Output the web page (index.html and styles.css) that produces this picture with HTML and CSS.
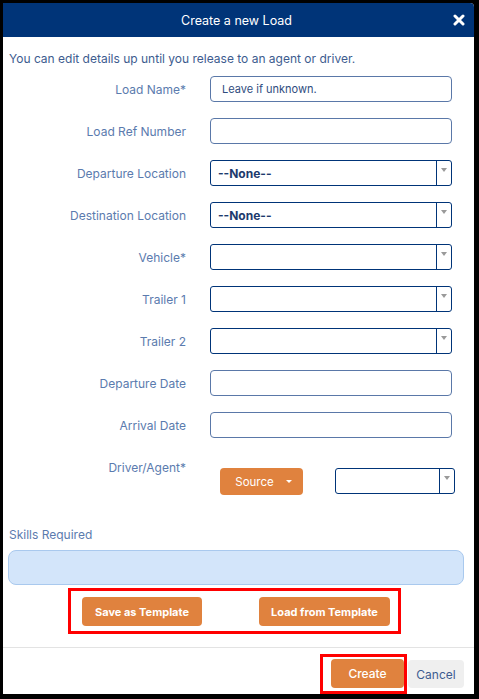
FILE: index.html
```html
<!DOCTYPE html>
<html>
<head>
<meta charset="utf-8">
<link rel="stylesheet" href="styles.css">
</head>
<body>
<div class="modal">
  <div class="header">
    <span class="title">Create a new Load</span>
    <svg class="close" width="12" height="12" viewBox="0 0 12 12"><path d="M2 2L10 10M10 2L2 10" stroke="#fff" stroke-width="3" stroke-linecap="round"/></svg>
  </div>
  <div class="body">
    <p class="intro">You can edit details up until you release to an agent or driver.</p>
    <div class="form">
      <label class="lbl">Load Name*</label>
      <div class="input"><span class="ph">Leave if unknown.</span></div>
      <label class="lbl">Load Ref Number</label>
      <div class="input"></div>
      <label class="lbl">Departure Location</label>
      <div class="select"><span class="val">--None--</span><span class="arrow"></span></div>
      <label class="lbl">Destination Location</label>
      <div class="select"><span class="val">--None--</span><span class="arrow"></span></div>
      <label class="lbl">Vehicle*</label>
      <div class="select"><span class="val"></span><span class="arrow"></span></div>
      <label class="lbl">Trailer 1</label>
      <div class="select"><span class="val"></span><span class="arrow"></span></div>
      <label class="lbl">Trailer 2</label>
      <div class="select"><span class="val"></span><span class="arrow"></span></div>
      <label class="lbl">Departure Date</label>
      <div class="input"></div>
      <label class="lbl">Arrival Date</label>
      <div class="input"></div>
    </div>
    <div class="driver">
      <label class="lbl dlbl">Driver/Agent*</label>
      <div class="dctrls">
        <button class="btn source">Source <span class="caret"></span></button>
        <div class="select small"><span class="val"></span><span class="arrow"></span></div>
      </div>
    </div>
    <div class="skills-lbl">Skills Required</div>
    <div class="skills"></div>
    <div class="tpl-wrap">
      <div class="outline tpl">
        <button class="btn tbtn save">Save as Template</button>
        <button class="btn tbtn load">Load from Template</button>
      </div>
    </div>
  </div>
  <div class="footer">
    <div class="outline cwrap"><button class="btn create">Create</button></div>
    <button class="cancel">Cancel</button>
  </div>
</div>
</body>
</html>
```
FILE: styles.css
```css
html, body {
  margin: 0;
  padding: 0;
  background: #000;
  width: 479px;
  height: 699px;
  overflow: hidden;
  font-family: Inter, "Liberation Sans", sans-serif;
}
.modal {
  margin: 3px 0 0 3px;
  width: 471px;
  height: 691px;
  background: #fff;
  display: flex;
  flex-direction: column;
  border-top-right-radius: 4px;
  overflow: hidden;
}
.header {
  height: 34px;
  flex: none;
  background: #003478;
  display: flex;
  align-items: center;
  justify-content: center;
  position: relative;
}
.title {
  color: #fff;
  font-size: 12.5px;
  margin-left: -4px;
}
.close {
  position: absolute;
  right: 9px;
  top: 11px;
}
.body {
  flex: 1;
  padding: 14px 0 0 0;
}
.intro {
  margin: 0 0 0 6px;
  font-size: 12px;
  line-height: 15px;
  color: #3d5c8f;
}
.form {
  margin-top: 10px;
  display: grid;
  grid-template-columns: 183px 242px;
  column-gap: 24px;
  row-gap: 16px;
  grid-auto-rows: 26px;
  align-items: center;
}
.lbl {
  font-size: 12px;
  color: #5b7bae;
  text-align: right;
  line-height: 14px;
  padding-top: 1px;
}
.input {
  box-sizing: border-box;
  height: 26px;
  border: 1px solid #5a78a8;
  border-radius: 4px;
  display: flex;
  align-items: center;
  padding-left: 11px;
}
.ph {
  font-size: 11px;
  color: #2f4c7e;
}
.select {
  box-sizing: border-box;
  height: 26px;
  border: 1.5px solid #003478;
  border-radius: 3px;
  display: flex;
  align-items: stretch;
}
.val {
  flex: 1;
  display: flex;
  align-items: center;
  padding-left: 7px;
  font-size: 12px;
  font-weight: 700;
  color: #1d3a6d;
}
.arrow {
  width: 14px;
  border-left: 1.5px solid #003478;
  position: relative;
}
.arrow::after {
  content: "";
  position: absolute;
  left: 4px;
  top: 7px;
  border-left: 3px solid transparent;
  border-right: 3px solid transparent;
  border-top: 4px solid #9a9a9a;
}
.driver {
  margin-top: 16px;
  display: grid;
  grid-template-columns: 183px auto;
  column-gap: 24px;
}
.dlbl {
  padding-top: 7px;
}
.dctrls {
  display: flex;
  gap: 32px;
  padding-top: 14px;
  padding-left: 10px;
}
.btn {
  background: #e0823e;
  color: #fff;
  border: none;
  border-radius: 4px;
  font-family: Inter, "Liberation Sans", sans-serif;
  cursor: pointer;
}
.source {
  width: 83px;
  height: 27px;
  font-size: 11.5px;
  display: flex;
  align-items: center;
  justify-content: center;
  gap: 12px;
  padding: 0 0 0 4px;
}
.caret {
  border-left: 3px solid transparent;
  border-right: 3px solid transparent;
  border-top: 3px solid #fff;
}
.select.small {
  width: 120px;
}
.skills-lbl {
  margin: 33px 0 0 6px;
  font-size: 12px;
  line-height: 14px;
  color: #5b7bae;
}
.skills {
  margin: 8px 10px 0 5px;
  height: 35px;
  box-sizing: border-box;
  background: #d3e5fa;
  border: 1px solid #a9c9ee;
  border-radius: 8px;
}
.tpl-wrap {
  margin-top: 3px;
  padding-left: 65px;
}
.outline {
  border: 3px solid #f00;
  box-sizing: border-box;
}
.tpl {
  width: 333px;
  height: 46px;
  display: flex;
  align-items: flex-start;
  padding: 6px 0 0 11px;
  gap: 57px;
}
.tbtn {
  height: 29px;
  font-size: 11px;
  font-weight: 700;
}
.save { width: 120px; }
.load { width: 131px; }
.footer {
  flex: none;
  height: 46px;
  border-top: 1px solid #e3e3e3;
  display: flex;
  justify-content: flex-end;
  align-items: flex-start;
  padding-right: 10px;
  gap: 1px;
}
.cwrap {
  margin-top: 6px;
  height: 40px;
  padding: 2px 0 0 8px;
}
.create {
  width: 73px;
  height: 29px;
  font-size: 12px;
  font-weight: 500;
}
.cancel {
  margin-top: 12px;
  width: 56px;
  height: 28px;
  border: none;
  border-radius: 4px;
  background: #efefef;
  color: #3d5c8f;
  font-size: 12px;
  font-family: Inter, "Liberation Sans", sans-serif;
}
```
